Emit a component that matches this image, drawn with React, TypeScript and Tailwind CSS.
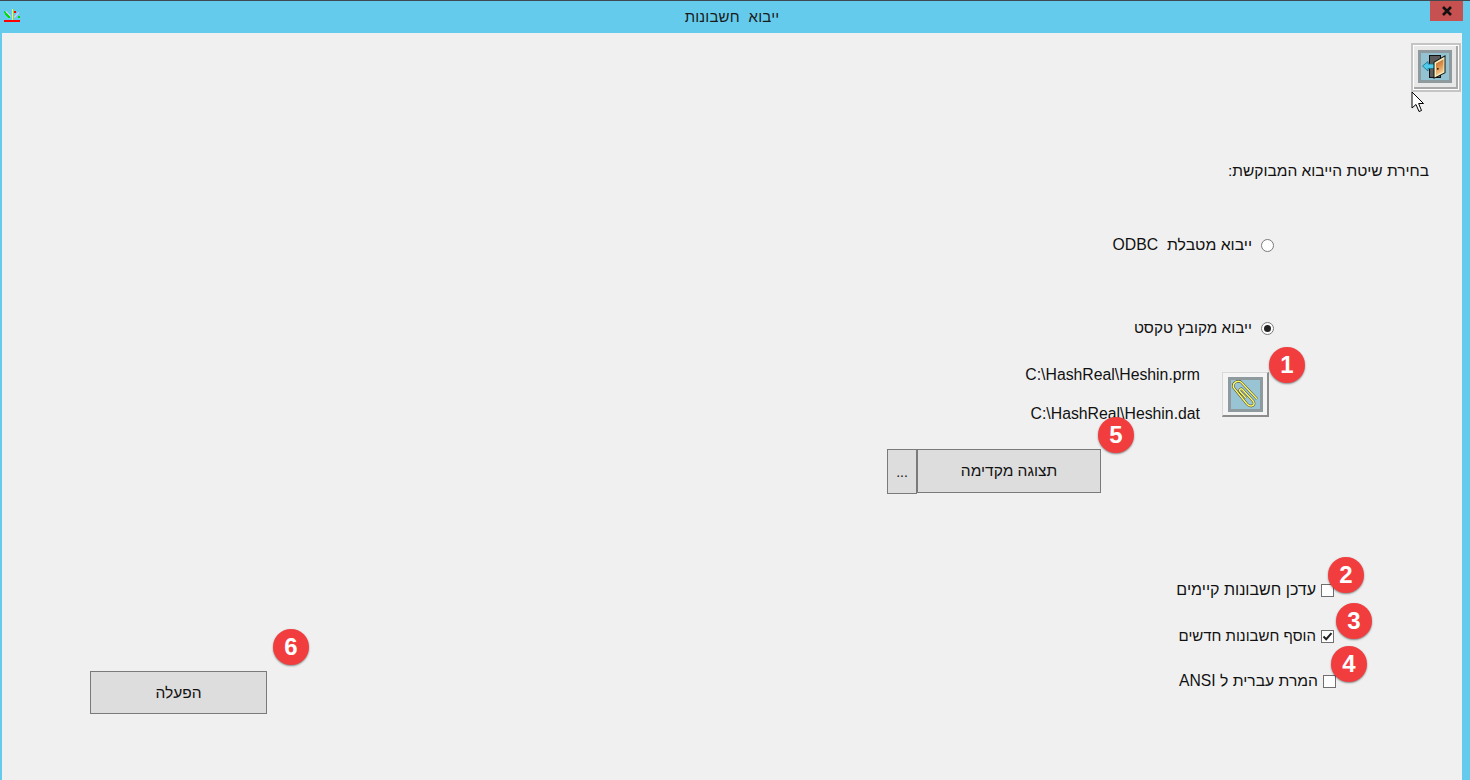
const FONT = "font-['Liberation_Sans',Arial,sans-serif]";

function Badge({ n, className }: { n: number; className: string }) {
  return (
    <div
      className={`absolute w-[36px] h-[36px] rounded-full bg-[#f23d3f] text-white flex items-center justify-center text-[24px] leading-none font-bold shadow-[0_1px_2px_rgba(0,0,0,0.45)] ${className}`}
    >
      {n}
    </div>
  );
}

function AppIcon() {
  return (
    <svg width="20" height="16" viewBox="0 0 20 16" className="block" shapeRendering="crispEdges">
      <rect x="0" y="11" width="16" height="2" fill="#ff0000" />
      <rect x="8" y="0" width="1" height="11" fill="#ffff00" />
      <path d="M0 2h1v1h1v1h1v1h1v1h1v1h1v2H5V9H4V8H3V7H2V6H1V4H0z" fill="#00e000" />
      <path d="M2 2h1v1h1v1h1v1h1v1h1v2H6V7H5V6H4V5H3V4H2z" fill="#c4c8f4" />
      <path d="M10 9h1V8h1V7h1V6h1V5h1V3h-1v1h-1v1h-1v1h-1v1h-1z" fill="#c4c8f4" />
      <rect x="10" y="2" width="2" height="2" fill="#ff0000" />
      <rect x="14" y="7" width="2" height="2" fill="#00e000" />
    </svg>
  );
}

function DoorIcon() {
  return (
    <svg width="28" height="27" viewBox="0 0 28 27" className="block">
      <defs>
        <linearGradient id="door" x1="0" y1="0" x2="0.3" y2="1">
          <stop offset="0" stopColor="#b9652a" />
          <stop offset="0.55" stopColor="#dd9550" />
          <stop offset="1" stopColor="#f3cf98" />
        </linearGradient>
      </defs>
      <rect x="8.5" y="2.5" width="11" height="22" fill="#5c5c5c" stroke="#111" strokeWidth="1" />
      <path d="M1.5 13 L7 8.5 V11 H14 V15.5 H7 V18 Z" fill="#4fcbe9" stroke="#14708c" strokeWidth="0.8" />
      <path d="M12.5 9 L24.5 2 V20 L12.5 26 Z" fill="#111" />
      <path d="M13.5 9.6 L23.5 3.8 V19.4 L13.5 24.5 Z" fill="#f6efbd" />
      <path d="M15 10.5 L22.5 6.2 V18.5 L15 22.5 Z" fill="url(#door)" />
      <rect x="16" y="15" width="1.6" height="1.6" fill="#2e1c0c" />
    </svg>
  );
}

function ClipIcon() {
  const d = "M26 19 L10.5 2.5 C7.5 -0.5 1 2.5 2.5 7.5 L16 24 C19 27.5 25 26 22.5 21.5 L11.5 9.5 C10 8 8 9.5 9 11.5 L15 18";
  return (
    <svg width="29" height="29" viewBox="0 0 29 29" className="block">
      <path d={d} fill="none" stroke="#3a3a20" strokeWidth="2.4" />
      <path d={d} fill="none" stroke="#fff76a" strokeWidth="1.5" />
    </svg>
  );
}

function Radio({ checked }: { checked?: boolean }) {
  return (
    <span className="w-[13px] h-[13px] shrink-0 rounded-full border border-[#7a7a7a] bg-white flex items-center justify-center">
      {checked && <span className="w-[7px] h-[7px] rounded-full bg-[#222]" />}
    </span>
  );
}

function Check({ checked }: { checked?: boolean }) {
  return (
    <span className="w-[13px] h-[13px] shrink-0 border border-[#6f6f6f] bg-white flex items-center justify-center">
      {checked && (
        <svg width="11" height="11" viewBox="0 0 11 11" className="block">
          <path d="M1.5 5.5 L4.2 8.2 L9.5 2.2" fill="none" stroke="#222" strokeWidth="2" />
        </svg>
      )}
    </span>
  );
}

function Cursor() {
  return (
    <svg width="14" height="22" viewBox="0 0 14 22" className="absolute left-[1411px] top-[91px]">
      <path d="M1 1 V17 L5 13.5 L8 20.5 L10.5 19.5 L7.6 12.5 H12.5 Z" fill="#fff" stroke="#000" strokeWidth="1" />
    </svg>
  );
}

export default function App() {
  return (
    <div className={`relative w-[1470px] h-[780px] overflow-hidden bg-[#65cbec] flex flex-col text-[#111] text-[15.5px] leading-[18px] ${FONT}`}>
      {/* title bar */}
      <div className="h-[33px] shrink-0 border-t border-[#3f4a50] flex items-start">
        <div className="w-[40px] pl-[4px] pt-[8px]">
          <AppIcon />
        </div>
        <div dir="rtl" className="flex-1 text-center pt-[7px] pr-[6px] text-[15px] text-[#1a1a1a] tracking-[0.2px]">
          ייבוא&nbsp; חשבונות
        </div>
        <div className="w-[40px] pr-[7px]">
          <div className="w-[33px] h-[20px] bg-[#c75050] flex items-center justify-center">
            <svg width="12" height="10" viewBox="0 0 12 10" className="block">
              <path d="M2 1 L10 9 M10 1 L2 9" stroke="#111" strokeWidth="2.6" />
            </svg>
          </div>
        </div>
      </div>

      {/* client */}
      <div className="flex-1 ml-[2px] mr-[8px] bg-[#f0f0f0] flex justify-between">
        <div className="pl-[88px] pt-[638px]">
          <button className="w-[177px] h-[43px] bg-[#dddddd] border border-[#7a7a7a] flex items-center justify-center" dir="rtl">
            הפעלה
          </button>
        </div>

        <div className="flex flex-col items-end">
          <div className="mt-[10px] mr-[1px] w-[50px] h-[49px] border-2 border-[#c4c4c4] bg-white flex">
            <div className="flex-1 m-[1px] bg-[#e8e8e8] border-r-2 border-b-2 border-[#a8a8a8] flex items-center justify-center">
              <div className="w-[34px] h-[33px] bg-[#93c2d2] border-[3px] border-[#8f9a9f] flex items-center justify-center overflow-hidden">
                <DoorIcon />
              </div>
            </div>
          </div>

          <div dir="rtl" className="mt-[70px] mr-[33px] whitespace-nowrap">
            בחירת שיטת הייבוא המבוקשת:
          </div>

          <div dir="rtl" className="mt-[56px] mr-[188px] flex items-center gap-[9px] whitespace-nowrap text-[15.8px]">
            <Radio />
            <span>ייבוא מטבלת&nbsp; ODBC</span>
          </div>

          <div dir="rtl" className="mt-[65px] mr-[188px] flex items-center gap-[9px] whitespace-nowrap text-[15.3px]">
            <Radio checked />
            <span>ייבוא מקובץ טקסט</span>
          </div>

          <div className="mt-[35px] mr-[193px] flex items-start gap-[22px]">
            <div className="-mt-[6px] h-[44px] flex flex-col items-end gap-[21px] text-[15.8px]">
              <span className="shrink-0">C:\HashReal\Heshin.prm</span>
              <span className="shrink-0">C:\HashReal\Heshin.dat</span>
            </div>
            <div className="w-[47px] h-[45px] bg-[#f4f4f4] border border-[#d8d8d8] border-r-[2px] border-b-[2px] border-r-[#8c8c8c] border-b-[#8c8c8c] flex items-center justify-center">
              <div className="w-[35px] h-[35px] bg-[#98c4d4] border-[3px] border-[#8f9a9f] flex items-center justify-center overflow-hidden">
                <ClipIcon />
              </div>
            </div>
          </div>

          <div className="mt-[32px] mr-[361px] flex">
            <button className="w-[30px] h-[45px] bg-[#dddddd] border border-[#7a7a7a] flex items-center justify-center text-[14px]">
              ...
            </button>
            <button dir="rtl" className="w-[184px] h-[44px] bg-[#dddddd] border border-[#7a7a7a] flex items-center justify-center">
              תצוגה מקדימה
            </button>
          </div>

          <div dir="rtl" className="mt-[87px] mr-[128px] flex items-center gap-[5px] whitespace-nowrap text-[16px]">
            <Check />
            <span>עדכן חשבונות קיימים</span>
          </div>
          <div dir="rtl" className="mt-[28px] mr-[128px] flex items-center gap-[5px] whitespace-nowrap text-[15px]">
            <Check checked />
            <span>הוסף חשבונות חדשים</span>
          </div>
          <div dir="rtl" className="mt-[27px] mr-[126px] flex items-center gap-[5px] whitespace-nowrap text-[15.7px]">
            <Check />
            <span>המרת עברית ל ANSI</span>
          </div>
        </div>
      </div>

      <Cursor />
      <Badge n={1} className="left-[1269px] top-[347px]" />
      <Badge n={5} className="left-[1098px] top-[417px]" />
      <Badge n={2} className="left-[1328px] top-[557px]" />
      <Badge n={3} className="left-[1336px] top-[603px]" />
      <Badge n={4} className="left-[1331px] top-[646px]" />
      <Badge n={6} className="left-[273px] top-[629px]" />
    </div>
  );
}
